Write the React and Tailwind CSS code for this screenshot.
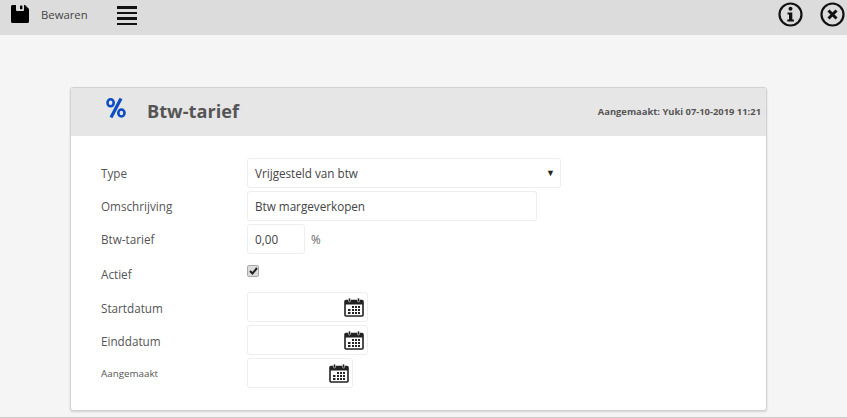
function SaveIcon() {
  return (
    <svg width="18" height="18" viewBox="0 0 18 18" className="mb-[7px] shrink-0">
      <path d="M1.5 0H14l4 4v12.5a1.5 1.5 0 0 1-1.5 1.5h-15A1.5 1.5 0 0 1 0 16.5v-15A1.5 1.5 0 0 1 1.5 0z" fill="#000" />
      <path d="M5 0h8v5a1 1 0 0 1-1 1H6a1 1 0 0 1-1-1z" fill="#dcdcdc" />
      <rect x="9" y="0.6" width="2.4" height="3.6" fill="#000" />
    </svg>
  )
}

function PercentIcon() {
  return (
    <svg width="20" height="20" viewBox="0 0 20 20" className="shrink-0">
      <g fill="none" stroke="#0b4dc2">
        <ellipse cx="4.6" cy="4.8" rx="3.1" ry="3.5" strokeWidth="2.6" />
        <ellipse cx="15.4" cy="15" rx="3.1" ry="3.5" strokeWidth="2.6" />
        <path d="M15 0.5L5 19.5" strokeWidth="3.2" />
      </g>
    </svg>
  )
}

function CalendarIcon() {
  return (
    <svg width="20" height="20" viewBox="0 0 20 20" className="text-[#222]">
      <path d="M1 4.5a1 1 0 0 1 1-1h16a1 1 0 0 1 1 1V18a1 1 0 0 1-1 1H2a1 1 0 0 1-1-1z" fill="#fff" stroke="currentColor" strokeWidth="1.6" />
      <rect x="1" y="3" width="18" height="4.5" fill="currentColor" />
      <rect x="4.5" y="1" width="2" height="4" rx="1" fill="currentColor" stroke="#fff" strokeWidth="0.5" />
      <rect x="13.5" y="1" width="2" height="4" rx="1" fill="currentColor" stroke="#fff" strokeWidth="0.5" />
      <g fill="currentColor">
        <rect x="8" y="9" width="2" height="2" />
        <rect x="11" y="9" width="2" height="2" />
        <rect x="14" y="9" width="2" height="2" />
        <rect x="4" y="12" width="2.5" height="2" />
        <rect x="8" y="12" width="2" height="2" />
        <rect x="11" y="12" width="2" height="2" />
        <rect x="14" y="12" width="2" height="2" />
        <rect x="4" y="15" width="2.5" height="2" />
        <rect x="8" y="15" width="2" height="2" />
        <rect x="11" y="15" width="2" height="2" />
        <rect x="14" y="15" width="2" height="2" />
      </g>
    </svg>
  )
}

function InfoIcon() {
  return (
    <svg width="25" height="25" viewBox="0 0 25 25">
      <circle cx="12.5" cy="12.5" r="11" fill="none" stroke="#111" strokeWidth="2.2" />
      <circle cx="12.5" cy="6.8" r="2" fill="#111" />
      <path d="M9.5 10.5h4.8v7h1.6v2H9.3v-2h1.7v-5H9.5z" fill="#111" />
    </svg>
  )
}

function CloseIcon() {
  return (
    <svg width="25" height="25" viewBox="0 0 25 25">
      <circle cx="12.5" cy="12.5" r="11" fill="none" stroke="#111" strokeWidth="2.2" />
      <path d="M8.5 8.5l8 8M16.5 8.5l-8 8" fill="none" stroke="#111" strokeWidth="3" />
    </svg>
  )
}

function Row({ label, small, className, children }) {
  return (
    <div className={`flex h-[30px] ${className || ''}`}>
      <div className={`w-[146px] shrink-0 text-[#555] ${small ? 'text-[9.8px]' : 'text-[11.7px]'}`}>{label}</div>
      {children}
    </div>
  )
}

function Field({ width, children, className }) {
  return (
    <div className={`flex h-[30px] items-center rounded-[3px] border border-[#eeeeee] bg-white pl-[7px] text-[11.7px] text-[#444] ${width} ${className || ''}`}>
      {children}
    </div>
  )
}

function DateField({ width }) {
  return (
    <Field width={width} className="justify-end pr-[3px]">
      <CalendarIcon />
    </Field>
  )
}

export default function App() {
  return (
    <div className="h-[418px] w-[847px] overflow-hidden bg-[#f5f5f5] font-['Open_Sans',sans-serif]">
      {/* Toolbar */}
      <div className="flex h-[35px] items-center bg-[#dcdcdc] pl-[11px] pr-[2px]">
        <SaveIcon />
        <span className="ml-[12px] mb-[5px] text-[11.3px] text-[#444]">Bewaren</span>
        <div className="ml-[29px] mb-[4px] flex w-[20px] flex-col gap-[3px]">
          <div className="h-[2.5px] bg-[#111]" />
          <div className="h-[2.5px] bg-[#111]" />
          <div className="h-[2.5px] bg-[#111]" />
          <div className="h-[2.5px] bg-[#111]" />
        </div>
        <div className="ml-auto mb-[6px] flex gap-[17px]">
          <InfoIcon />
          <CloseIcon />
        </div>
      </div>

      {/* Card */}
      <div className="ml-[70px] mt-[52px] h-[324px] w-[697px] rounded-[3px] border border-[#d2d2d2] bg-white shadow-[0_1px_2px_rgba(0,0,0,0.15)]">
        <div className="flex h-[48px] items-center justify-between bg-[#e6e6e6] pr-[5px]">
          <div className="flex items-center">
            <div className="ml-[35px] mb-[8px]"><PercentIcon /></div>
            <h1 className="ml-[21px] text-[18.2px] font-bold text-[#555]">Btw-tarief</h1>
          </div>
          <span className="text-[9.4px] font-bold text-[#555]">Aangemaakt: Yuki 07-10-2019 11:21</span>
        </div>

        <div className="flex flex-col gap-[3px] pl-[30px] pt-[22px]">
          <Row label="Type" className="leading-[30px]">
            <Field width="w-[314px]" className="justify-between pr-[5px]">
              <span>Vrijgesteld van btw</span>
              <span className="text-[9px] text-[#222]">▼</span>
            </Field>
          </Row>
          <Row label="Omschrijving" className="leading-[30px]">
            <Field width="w-[290px]">Btw margeverkopen</Field>
          </Row>
          <Row label="Btw-tarief" className="leading-[30px]">
            <Field width="w-[58px]">0,00</Field>
            <span className="ml-[6px] text-[11.7px] text-[#666]">%</span>
          </Row>
          <Row label="Actief" className="!h-[32px] leading-[34px]">
            <div className="mt-[8px] flex h-[12px] w-[12px] items-center justify-center rounded-[2px] border border-[#aaa] bg-[#dcdcdc]">
              <svg width="9" height="8" viewBox="0 0 9 8"><path d="M1 4l2.5 2.5L8 1" fill="none" stroke="#222" strokeWidth="2" /></svg>
            </div>
          </Row>
          <Row label="Startdatum" className="leading-[32px]"><DateField width="w-[121px]" /></Row>
          <Row label="Einddatum" className="leading-[32px]"><DateField width="w-[121px]" /></Row>
          <Row label="Aangemaakt" small className="leading-[32px]"><DateField width="w-[106px]" /></Row>
        </div>
      </div>
      <div className="mt-[6px] h-[1px] bg-[#cccccc]" />
    </div>
  )
}
